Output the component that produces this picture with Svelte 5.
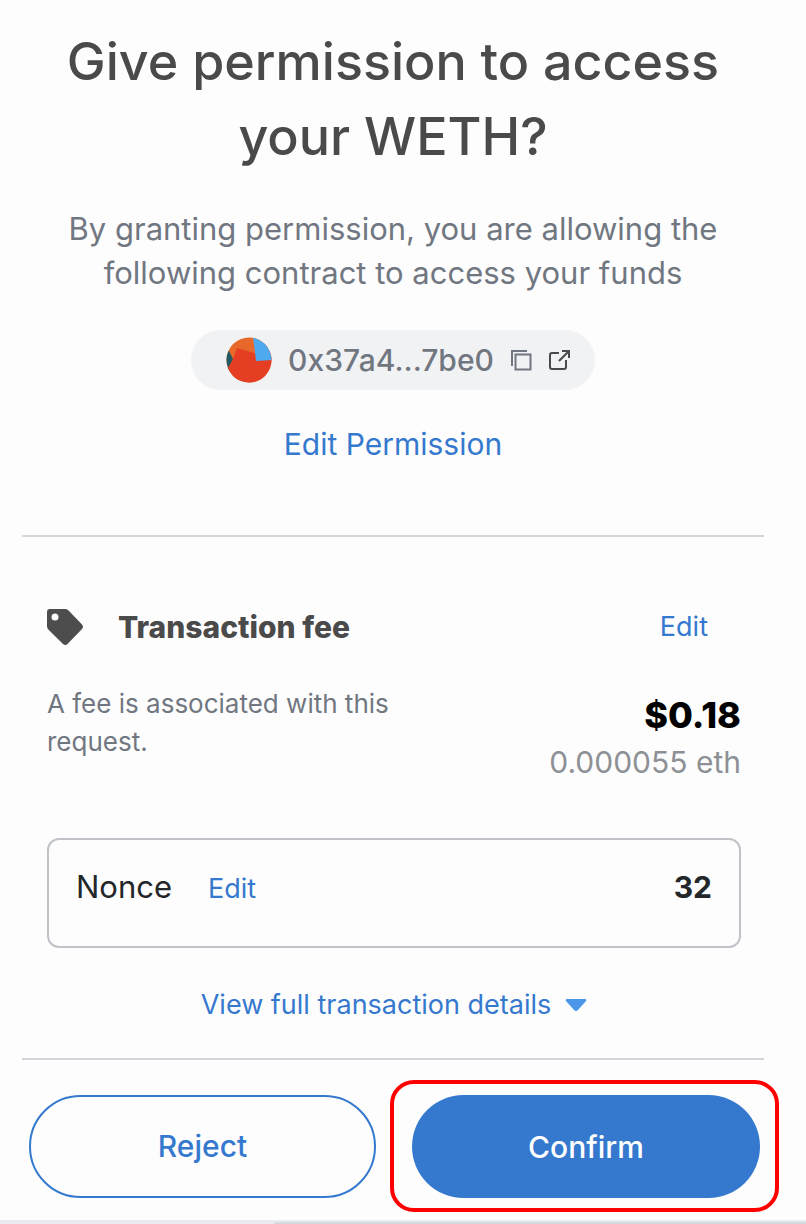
<script>
  const contract = '0x37a4...7be0';
  const fee = { fiat: '$0.18', native: '0.000055 eth' };
  const nonce = 32;
</script>

<div class="page">
  <main>
    <section class="intro">
      <h1>Give permission to access your WETH?</h1>
      <p class="lead">By granting permission, you are allowing the following contract to access your funds</p>
      <div class="chip">
        <svg class="avatar" viewBox="0 0 46 46" aria-hidden="true">
          <defs><clipPath id="disc"><circle cx="23" cy="23" r="22.5" /></clipPath></defs>
          <g clip-path="url(#disc)">
            <rect width="46" height="46" fill="#e8672a" />
            <path d="M0 12 3 14 7 22 4 34 0 36Z" fill="#215a60" />
            <path d="M11 11 28 16 46 14V46H5L2 31 7 22Z" fill="#e63e22" />
            <path d="M27 0H46V23L30 24Z" fill="#4faaed" />
          </g>
        </svg>
        <span class="address">{contract}</span>
        <button class="icon" aria-label="Copy address">
          <svg viewBox="0 0 22 22" fill="none" stroke="#717781" stroke-width="2">
            <path d="M2 17V2H17" />
            <rect x="5.500" y="5.500" width="15" height="15" />
          </svg>
        </button>
        <button class="icon" aria-label="Open in explorer">
          <svg viewBox="0 0 22 22" fill="none" stroke="#4a4a4a" stroke-width="2">
            <path d="M11 4H4Q2 4 2 6V18Q2 20 4 20H16Q18 20 18 18V11" />
            <path d="M11 12 20 3M14 2H21V9" />
          </svg>
        </button>
      </div>
      <button class="link permission">Edit Permission</button>
    </section>

    <section class="details">
      <div class="fee-head">
        <svg class="tag" viewBox="0 0 36 36" aria-hidden="true">
          <path fill-rule="evenodd" fill="#4d4d4d" d="M3 0H18Q20 0 21.300 1.300L35 15.500Q37 18 35 20L20.500 35Q18.500 37 16 35L1.300 20.500Q0 19 0 17V3Q0 0 3 0ZM8 4.500A3.500 3.500 0 1 0 8 11.500A3.500 3.500 0 1 0 8 4.500Z" />
        </svg>
        <h2>Transaction fee</h2>
        <button class="link small">Edit</button>
      </div>
      <div class="fee-body">
        <p class="note">A fee is associated with this request.</p>
        <div class="amount">
          <strong>{fee.fiat}</strong>
          <span>{fee.native}</span>
        </div>
      </div>
      <div class="nonce">
        <span>Nonce</span>
        <button class="link small">Edit</button>
        <strong>{nonce}</strong>
      </div>
      <button class="link small more">
        View full transaction details
        <svg viewBox="0 0 22 12" aria-hidden="true"><path d="M2 0H20Q22 0 21 2L13 11Q11 13 9 11L1 2Q0 0 2 0Z" fill="#4d97ea" /></svg>
      </button>
    </section>
  </main>

  <footer>
    <button class="action reject">Reject</button>
    <div class="highlight"><button class="action confirm">Confirm</button></div>
  </footer>
  <div class="edge"><div></div></div>
</div>

<style>
  :global(body) { background: #fdfdfd; }
  .page {
    min-height: 100vh;
    box-sizing: border-box;
    display: flex;
    flex-direction: column;
    color: #4a4a4a;
    font-family: Inter, sans-serif;
  }
  h1, h2, p { margin: 0; }
  button {
    margin: 0;
    padding: 0;
    border: 0;
    background: none;
    font: inherit;
    cursor: pointer;
  }
  main { padding: 24px 42px 0 22px; }
  .intro {
    display: flex;
    flex-direction: column;
    align-items: center;
    padding: 0 40px 71px;
    border-bottom: 2px solid #d2d6dc;
    text-align: center;
  }
  h1 {
    font-size: 52px;
    line-height: 75px;
    font-weight: 500;
  }
  .lead {
    margin-top: 33px;
    color: #717781;
    font-size: 31px;
    line-height: 44px;
  }
  .chip {
    display: flex;
    align-items: center;
    height: 60px;
    margin-top: 35px;
    padding: 0 25px 0 35px;
    border-radius: 30px;
    background: #f1f2f3;
    color: #717781;
  }
  .avatar { width: 46px; height: 46px; }
  .address { margin: 0 16px; font-size: 30px; line-height: 40px; font-weight: 500; }
  .icon { display: flex; }
  .icon + .icon { margin-left: 16px; }
  .icon svg { width: 22px; height: 22px; }
  .link { color: #3579cf; }
  .permission { margin-top: 34px; font-size: 30px; line-height: 40px; }
  .small { font-size: 27px; line-height: 38px; }
  .details {
    display: flex;
    flex-direction: column;
    padding: 70px 23px 34px 25px;
    border-bottom: 2px solid #d2d6dc;
  }
  .fee-head { display: flex; align-items: center; padding-right: 33px; }
  .tag { width: 36px; height: 36px; margin-right: 35px; }
  h2 { flex: 1; font-size: 30px; line-height: 40px; font-weight: 800; }
  .fee-body { display: flex; justify-content: space-between; margin-top: 38px; }
  .note {
    max-width: 370px;
    color: #717781;
    font-size: 26px;
    line-height: 38px;
  }
  .amount { display: flex; flex-direction: column; align-items: flex-end; padding-top: 5px; }
  .amount strong { color: #000; font-size: 36px; line-height: 50px; font-weight: 800; }
  .amount span { color: #8d9095; font-size: 30px; line-height: 44px; }
  .nonce {
    display: flex;
    align-items: baseline;
    gap: 36px;
    margin-top: 54px;
    padding: 28px 27px 38px;
    border: 2px solid #bfc3c8;
    border-radius: 12px;
    color: #24272a;
    font-size: 30px;
    line-height: 38px;
  }
  .nonce span { font-size: 31px; }
  .nonce strong { margin-left: auto; }
  .more { display: flex; align-self: center; align-items: center; gap: 14px; margin-top: 38px; }
  .more svg { width: 22px; height: 12px; }
  footer {
    display: grid;
    grid-template-columns: 347fr 389fr;
    align-items: center;
    gap: 14px;
    margin: 20px 27px 8px 29px;
  }
  .action {
    height: 103px;
    border-radius: 52px;
    font-size: 30px;
    line-height: 40px;
    font-weight: 500;
  }
  .reject { border: 2px solid #3579cf; color: #3579cf; }
  .highlight {
    display: flex;
    padding: 11px 15px 10px 18px;
    border: 4px solid #f00;
    border-radius: 24px;
  }
  .confirm { flex: 1; background: #3579cf; color: #fff; }
  .edge { height: 4px; background: #e9ebf1; display: flex; align-items: flex-end; margin-top: auto; }
  .edge div { height: 2px; width: 66%; margin-left: auto; background: #d5d7de; border-radius: 2px 0 0; }
</style>
